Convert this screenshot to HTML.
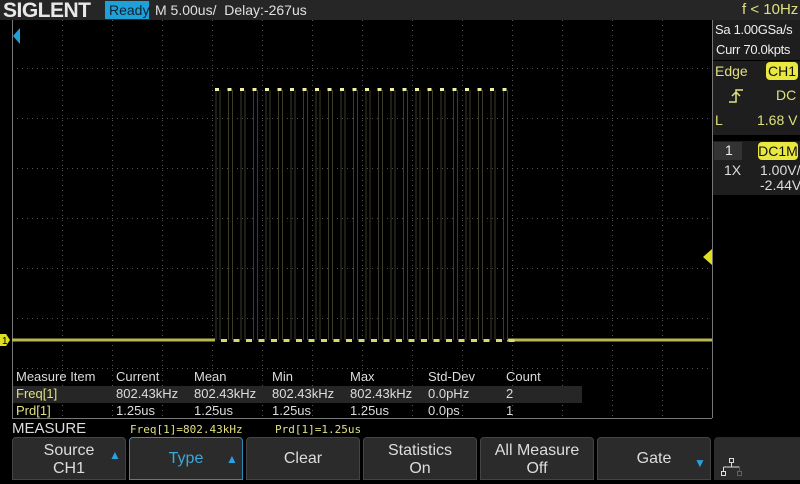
<!DOCTYPE html>
<html><head><meta charset="utf-8"><style>
*{margin:0;padding:0;box-sizing:border-box}
body{width:800px;height:480px;background:#000;position:relative;overflow:hidden;font-family:"Liberation Sans",sans-serif;color:#ddd}
.a{position:absolute;white-space:nowrap}
.top{left:0;top:0;width:800px;height:20px;background:#262626}
.btn{position:absolute;top:437px;height:43px;width:114px;background:#2b2b2b;border:1px solid #444;border-radius:4px 4px 0 0;text-align:center;color:#ddd;font-size:16px;line-height:18px}
.y{color:#e0e080}
.rp{background:#1e1e1e}
</style></head><body>
<div class="a top"></div>
<div class="a" style="left:3px;top:-1px;font-size:21px;font-weight:bold;color:#e8e8e8;letter-spacing:-0.5px;">SIGLENT</div>
<div class="a" style="left:105px;top:1px;width:44px;height:18px;background:#1ea0d8;color:#123;font-size:14px;line-height:18px;padding-left:4px">Ready</div>
<div class="a" style="left:155px;top:1px;font-size:14px;color:#e0e0e0;line-height:18px">M 5.00us/&nbsp; Delay:-267us</div>
<div class="a" style="left:742px;top:1px;font-size:15px;color:#e0e080;line-height:18px">f &lt; 10Hz</div>

<svg class="a" style="left:0;top:0" width="800" height="480">
<g stroke="#555" stroke-width="1" stroke-dasharray="1 4">
<line x1="62.5" y1="20" x2="62.5" y2="418"/><line x1="112.5" y1="20" x2="112.5" y2="418"/><line x1="162.5" y1="20" x2="162.5" y2="418"/><line x1="212.5" y1="20" x2="212.5" y2="418"/><line x1="262.5" y1="20" x2="262.5" y2="418"/><line x1="312.5" y1="20" x2="312.5" y2="418"/><line x1="362.5" y1="20" x2="362.5" y2="418"/><line x1="412.5" y1="20" x2="412.5" y2="418"/><line x1="462.5" y1="20" x2="462.5" y2="418"/><line x1="512.5" y1="20" x2="512.5" y2="418"/><line x1="562.5" y1="20" x2="562.5" y2="418"/><line x1="612.5" y1="20" x2="612.5" y2="418"/><line x1="662.5" y1="20" x2="662.5" y2="418"/>
<line x1="12" y1="68.5" x2="712" y2="68.5"/><line x1="12" y1="118.5" x2="712" y2="118.5"/><line x1="12" y1="168.5" x2="712" y2="168.5"/><line x1="12" y1="218.5" x2="712" y2="218.5"/><line x1="12" y1="268.5" x2="712" y2="268.5"/><line x1="12" y1="318.5" x2="712" y2="318.5"/><line x1="12" y1="368.5" x2="712" y2="368.5"/>
</g>
<line x1="12.5" y1="20" x2="12.5" y2="418" stroke="#777"/>
<line x1="712.5" y1="20" x2="712.5" y2="418" stroke="#777"/>
<line x1="12" y1="418.5" x2="712" y2="418.5" stroke="#777"/>
<polygon points="13,36 20,28 20,44" fill="#1ea0d8"/>
<polygon points="703,257 712,249 712,265" fill="#e0e020"/>
<polygon points="0,334 6,334 10,340 6,346 0,346" fill="#e0e020"/>
<text x="2" y="344" font-size="10" fill="#000" font-family="Liberation Sans">1</text>
<line x1="12" y1="340" x2="215" y2="340" stroke="#b8b850" stroke-width="3"/>
<line x1="507" y1="340" x2="712" y2="340" stroke="#b8b850" stroke-width="3"/>
</svg>
<svg class="a" style="left:0;top:0" width="800" height="480" id="s"></svg>
<script>
var s='';for(var i=0;i<24;i++){var x=215+i*12.5;
s+='<line x1="'+(x+1)+'" y1="90" x2="'+(x+1)+'" y2="340" stroke="#3c3c28"/>';
s+='<line x1="'+(x+5)+'" y1="90" x2="'+(x+5)+'" y2="340" stroke="#3c3c28"/>';
s+='<rect x="'+x+'" y="88" width="4" height="3" fill="#f0f0a0"/>';
s+='<rect x="'+(x+6)+'" y="339" width="6" height="3" fill="#d8d870"/>';}
document.getElementById('s').innerHTML=s;
</script>

<!-- right panel -->
<div class="a rp" style="left:713px;top:20px;width:87px;height:40px"></div>
<div class="a" style="left:715px;top:22px;font-size:13px;color:#eee;letter-spacing:-0.3px">Sa 1.00GSa/s</div>
<div class="a" style="left:716px;top:42px;font-size:13px;color:#eee;letter-spacing:-0.3px">Curr 70.0kpts</div>
<div class="a rp" style="left:713px;top:61px;width:87px;height:74px"></div>
<div class="a y" style="left:715px;top:63px;font-size:14px">Edge</div>
<div class="a" style="left:766px;top:62px;width:32px;height:18px;background:#e8e840;border-radius:4px;color:#111;font-size:14px;text-align:center;line-height:18px">CH1</div>
<svg class="a" style="left:728px;top:88px" width="16" height="16"><path d="M1 14h7V2h7M4 8l4-4 4 4" fill="none" stroke="#e0e080" stroke-width="1.5"/></svg>
<div class="a y" style="left:776px;top:87px;font-size:14px">DC</div>
<div class="a y" style="left:715px;top:112px;font-size:14px">L</div>
<div class="a y" style="left:757px;top:112px;font-size:14px">1.68 V</div>
<div class="a rp" style="left:713px;top:141px;width:87px;height:54px"></div>
<div class="a" style="left:714px;top:142px;width:28px;height:18px;background:#333;color:#eee;font-size:14px;padding-left:11px">1</div>
<div class="a" style="left:758px;top:142px;width:40px;height:18px;background:#e8e840;border-radius:4px;color:#111;font-size:14px;text-align:center;line-height:18px">DC1M</div>
<div class="a" style="left:724px;top:162px;font-size:14px;color:#ddd">1X</div>
<div class="a" style="left:760px;top:162px;font-size:14px;color:#ddd">1.00V/</div>
<div class="a" style="left:760px;top:177px;font-size:14px;color:#ddd">-2.44V</div>

<!-- measure table -->
<div class="a" style="left:13px;top:386px;width:569px;height:17px;background:#262626"></div>
<div style="font-size:13px;color:#ddd">
<div class="a" style="left:16px;top:369px">Measure Item</div>
<div class="a" style="left:116px;top:369px">Current</div>
<div class="a" style="left:194px;top:369px">Mean</div>
<div class="a" style="left:272px;top:369px">Min</div>
<div class="a" style="left:350px;top:369px">Max</div>
<div class="a" style="left:428px;top:369px">Std-Dev</div>
<div class="a" style="left:506px;top:369px">Count</div>
<div class="a y" style="left:16px;top:386px">Freq[1]</div>
<div class="a" style="left:116px;top:386px">802.43kHz</div>
<div class="a" style="left:194px;top:386px">802.43kHz</div>
<div class="a" style="left:272px;top:386px">802.43kHz</div>
<div class="a" style="left:350px;top:386px">802.43kHz</div>
<div class="a" style="left:428px;top:386px">0.0pHz</div>
<div class="a" style="left:506px;top:386px">2</div>
<div class="a y" style="left:16px;top:403px">Prd[1]</div>
<div class="a" style="left:116px;top:403px">1.25us</div>
<div class="a" style="left:194px;top:403px">1.25us</div>
<div class="a" style="left:272px;top:403px">1.25us</div>
<div class="a" style="left:350px;top:403px">1.25us</div>
<div class="a" style="left:428px;top:403px">0.0ps</div>
<div class="a" style="left:506px;top:403px">1</div>
</div>
<div class="a" style="left:12px;top:420px;font-size:15px;color:#ddd">MEASURE</div>
<div class="a y" style="left:130px;top:423px;font-size:11px;font-family:'DejaVu Sans Mono',monospace">Freq[1]=802.43kHz</div>
<div class="a y" style="left:275px;top:423px;font-size:11px;font-family:'DejaVu Sans Mono',monospace">Prd[1]=1.25us</div>

<div class="btn" style="left:12px;padding-top:4px">Source<br>CH1<span class="a" style="left:96px;top:8px;color:#2aa0e0;font-size:12px">▲</span></div>
<div class="btn" style="left:129px;border-color:#2a8ab8;color:#3aa8d8;line-height:42px">Type<span class="a" style="left:96px;top:0;color:#2aa0e0;font-size:12px">▲</span></div>
<div class="btn" style="left:246px;line-height:42px">Clear</div>
<div class="btn" style="left:363px;padding-top:4px">Statistics<br>On</div>
<div class="btn" style="left:480px;padding-top:4px">All Measure<br>Off</div>
<div class="btn" style="left:597px;line-height:42px">Gate<span class="a" style="left:96px;top:4px;color:#2aa0e0;font-size:12px">▼</span></div>
<div class="a" style="left:714px;top:437px;width:86px;height:43px;background:#2b2b2b;border-radius:4px 0 0 0"></div>
<svg class="a" style="left:720px;top:458px" width="24" height="20"><g fill="none" stroke="#ddd"><rect x="9.5" y="0.5" width="4" height="4"/><path d="M11.5 5v4M3.5 9h16M3.5 9v4"/><rect x="1.5" y="13.5" width="4" height="4"/></g><g fill="none" stroke="#d03030"><path d="M19.5 9v4"/><rect x="17.5" y="13.5" width="4" height="4"/></g></svg>
</body></html>
